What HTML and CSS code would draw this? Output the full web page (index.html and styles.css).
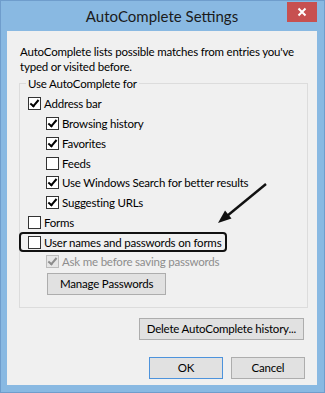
FILE: index.html
```html
<!DOCTYPE html>
<html lang="en">
<head>
  <meta charset="UTF-8">
  <title>AutoComplete Settings</title>
  <link rel="stylesheet" href="styles.css">
</head>
<body>

  <div class="window">
    <!-- Title bar -->
    <div class="titlebar">
      <span class="title">AutoComplete Settings</span>
      <button class="close" aria-label="Close">
        <svg width="10" height="10" viewBox="0 0 10 10">
          <path d="M1.5 1.5 L8.5 8.5 M8.5 1.5 L1.5 8.5" stroke="#fff" stroke-width="2"/>
        </svg>
      </button>
    </div>

    <div class="content">
      <p class="intro">AutoComplete lists possible matches from entries you've typed or visited before.</p>

      <!-- Use AutoComplete for -->
      <fieldset class="group">
        <legend>Use AutoComplete for</legend>
        <div class="option"><span class="box checked"></span>Address bar</div>
        <div class="option sub"><span class="box checked"></span>Browsing history</div>
        <div class="option sub"><span class="box checked"></span>Favorites</div>
        <div class="option sub"><span class="box"></span>Feeds</div>
        <div class="option sub"><span class="box checked"></span>Use Windows Search for better results</div>
        <div class="option sub"><span class="box checked"></span>Suggesting URLs</div>
        <div class="option"><span class="box"></span>Forms</div>
        <div class="option callout"><span class="box"></span>User names and passwords on forms</div>
        <div class="option sub disabled"><span class="box checked"></span>Ask me before saving passwords</div>
        <button class="btn btn-manage">Manage Passwords</button>
      </fieldset>

      <div class="history-row">
        <button class="btn btn-history">Delete AutoComplete history...</button>
      </div>

      <div class="actions">
        <button class="btn btn-default">OK</button>
        <button class="btn">Cancel</button>
      </div>
    </div>

    <!-- annotation arrow -->
    <svg class="arrow" width="325" height="393" viewBox="0 0 325 393">
      <line x1="266" y1="184" x2="227" y2="216" stroke="#111" stroke-width="2.4"/>
      <polygon points="218,223 231.5,218.5 225,210.5" fill="#111"/>
    </svg>
  </div>

</body>
</html>
```

FILE: styles.css
```css
body {
  margin: 0;
  font-family: Lato, 'Noto Sans', sans-serif;
  font-size: 11.5px;
  letter-spacing: -0.2px;
  color: #000;
}

.window {
  position: relative;
  width: 325px;
  height: 393px;
  box-sizing: border-box;
  border: 1px solid #6f9dcc;
  background: #89b9e2;
  padding: 0 7px 7px 6px;
  display: flex;
  flex-direction: column;
}

.titlebar {
  height: 30px;
  display: grid;
  grid-template-columns: 1fr auto 1fr;
}

.title {
  grid-column: 2;
  font-size: 15px;
  letter-spacing: 0;
  line-height: 30px;
  color: #1b1b1b;
  white-space: nowrap;
}

.close {
  grid-column: 3;
  justify-self: end;
  align-self: start;
  width: 30px;
  height: 20px;
  margin-top: 1px;
  padding: 0;
  border: none;
  background: #c75050;
  display: flex;
  justify-content: center;
  align-items: center;
}

.content {
  flex: 1;
  background: #f0f0f0;
  padding: 13px 9px 0 12px;
}

.intro {
  margin: 0;
  padding-left: 1px;
  line-height: 15px;
}

.group {
  margin: 2px 0 0 0;
  padding: 3px 0 12px 8px;
  border: 1px solid #dcdcdc;
}

.group legend {
  padding: 0 2px;
  margin-left: -2px;
  line-height: 15px;
}

.option {
  height: 19.75px;
  display: flex;
  align-items: center;
  gap: 3px;
  white-space: nowrap;
}

.option.sub {
  padding-left: 18px;
}

.box {
  position: relative;
  width: 13px;
  height: 13px;
  box-sizing: border-box;
  border: 1px solid #333;
  background: #fff;
  flex-shrink: 0;
}

.box.checked::after {
  content: '';
  position: absolute;
  left: 3px;
  top: 0px;
  width: 3px;
  height: 7px;
  border-right: 2px solid #000;
  border-bottom: 2px solid #000;
  transform: rotate(40deg);
}

.option.disabled {
  color: #8d8d8d;
}

.option.disabled .box {
  border-color: #bcbcbc;
  background: #e6e6e6;
}

.option.disabled .box.checked::after {
  border-color: #8c8c8c;
}

/* highlight box drawn around the forms option */
.callout {
  width: fit-content;
  margin-left: -9px;
  padding: 0 4px 0 7px;
  border: 2px solid #111;
  border-radius: 4px;
  box-sizing: border-box;
}

.btn {
  font-family: inherit;
  font-size: 11.5px;
  letter-spacing: -0.2px;
  color: #000;
  height: 22px;
  padding: 0 12px;
  background: #e1e1e1;
  border: 1px solid #adadad;
  line-height: 20px;
}

.btn-manage {
  display: block;
  margin: 1px 0 0 19px;
}

.btn-history {
  padding: 0 7px;
}

.history-row {
  display: flex;
  justify-content: flex-end;
  margin-top: 10px;
  padding-right: 4px;
}

.actions {
  display: flex;
  justify-content: flex-end;
  gap: 8px;
  margin-top: 17px;
  padding-right: 3px;
}

.actions .btn {
  width: 74px;
}

.btn-default {
  border-color: #4d93dc;
}

.arrow {
  position: absolute;
  left: -1px;
  top: -1px;
  pointer-events: none;
}
```
